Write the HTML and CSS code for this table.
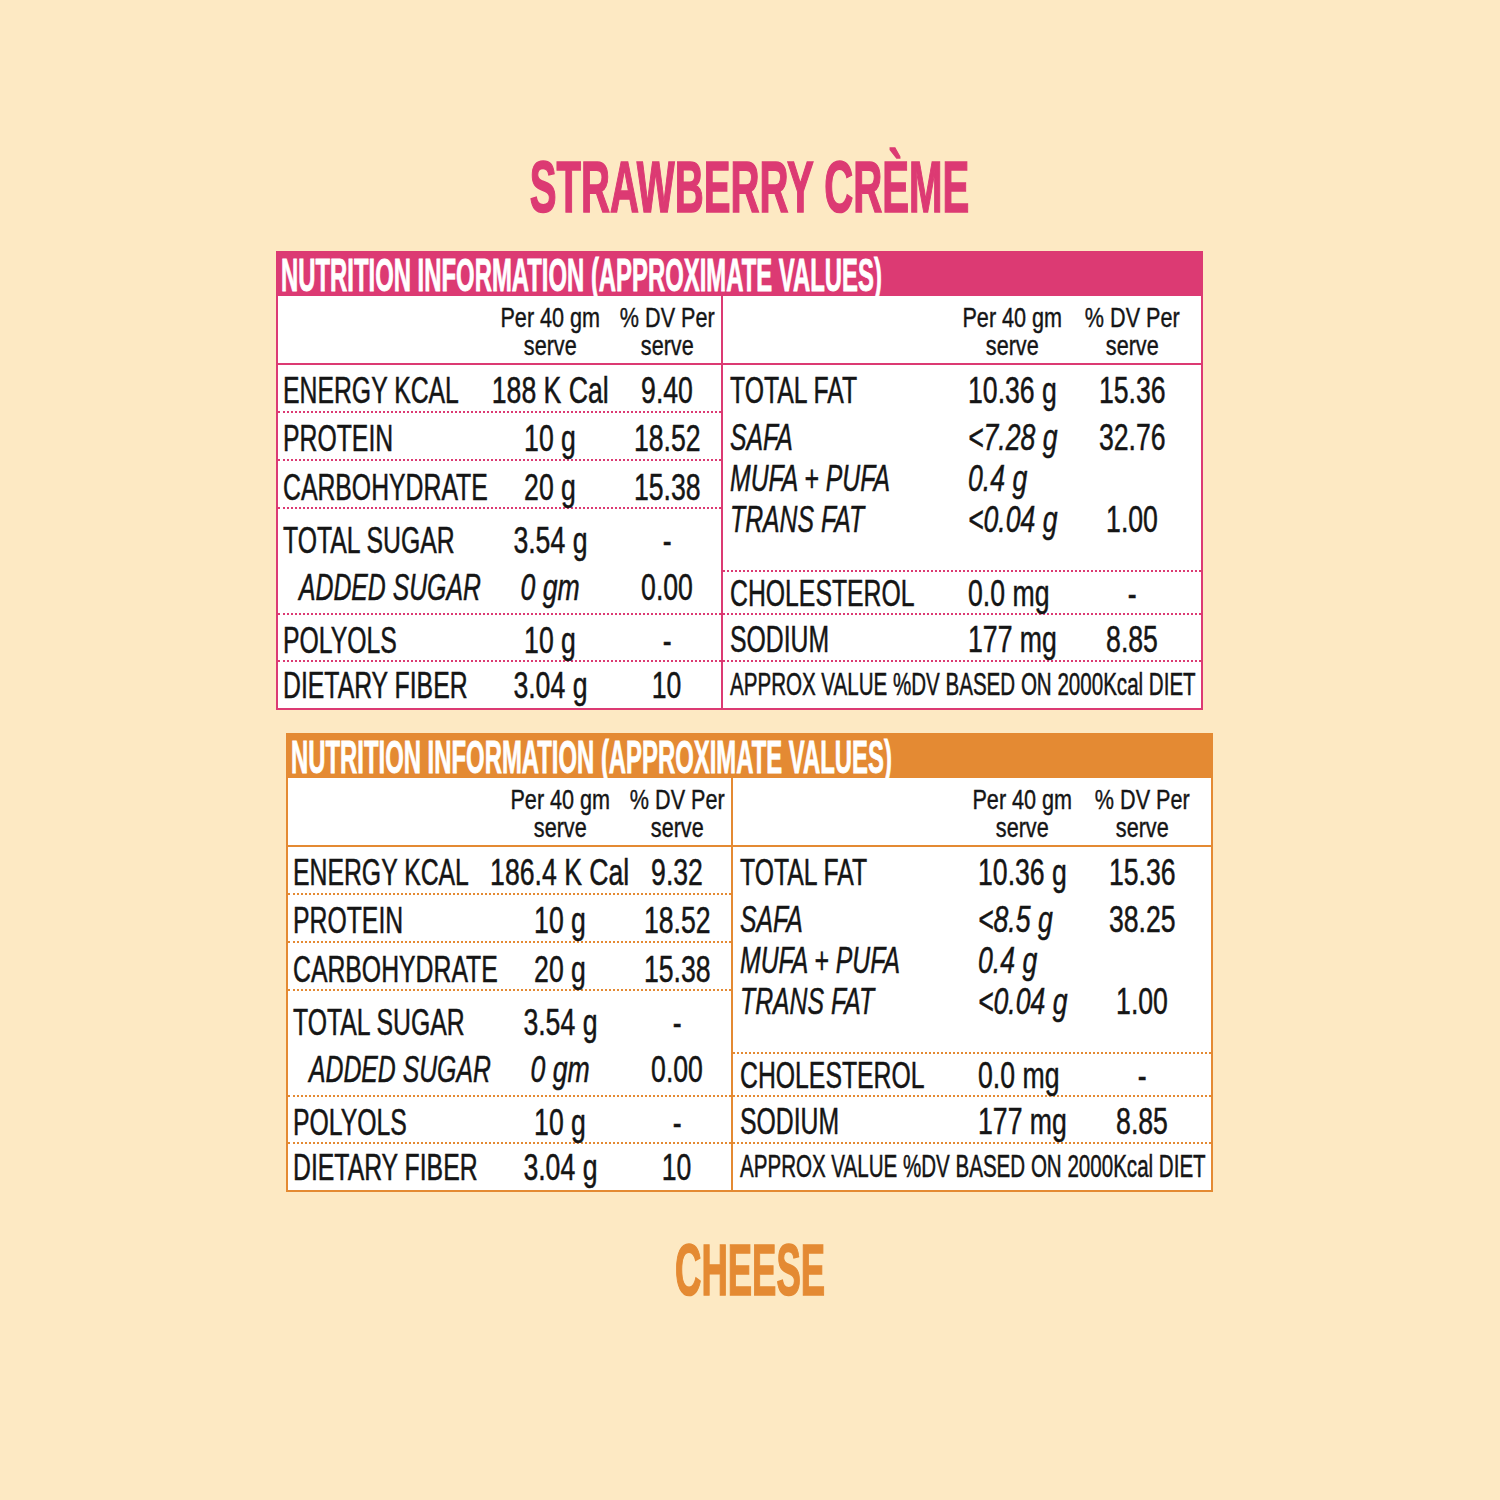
FILE: index.html
```html
<!DOCTYPE html>
<html>
<head>
<meta charset="utf-8">
<link rel="stylesheet" href="styles.css">
</head>
<body>
<div class="page">
  <div class="title pink"><span class="s">STRAWBERRY CRÈME</span></div>

  <div class="nt pink">
    <div class="bar"><span class="s">NUTRITION INFORMATION (APPROXIMATE VALUES)</span></div>
    <div class="cols">
      <div class="panel left">
        <div class="hdr"><div></div><div class="hc"><span class="s">Per 40 gm<br>serve</span></div><div class="hc"><span class="s">% DV Per<br>serve</span></div></div>
        <div class="row ra"><div class="ln"><div class="lb"><span class="s">ENERGY KCAL</span></div><div class="c"><span class="s n">188 K Cal</span></div><div class="c"><span class="s n">9.40</span></div></div></div>
        <div class="row ra"><div class="ln"><div class="lb"><span class="s">PROTEIN</span></div><div class="c"><span class="s n">10 g</span></div><div class="c"><span class="s n">18.52</span></div></div></div>
        <div class="row rb"><div class="ln"><div class="lb"><span class="s">CARBOHYDRATE</span></div><div class="c"><span class="s n">20 g</span></div><div class="c"><span class="s n">15.38</span></div></div></div>
        <div class="row rs">
          <div class="ln tall"><div class="lb"><span class="s">TOTAL SUGAR</span></div><div class="c"><span class="s n">3.54 g</span></div><div class="c"><span class="s n">-</span></div></div>
          <div class="ln tall"><div class="lb ind"><span class="s it">ADDED SUGAR</span></div><div class="c"><span class="s n it">0 gm</span></div><div class="c"><span class="s n">0.00</span></div></div>
        </div>
        <div class="row rp"><div class="ln"><div class="lb"><span class="s">POLYOLS</span></div><div class="c"><span class="s n">10 g</span></div><div class="c"><span class="s n">-</span></div></div></div>
        <div class="row rf"><div class="ln"><div class="lb"><span class="s">DIETARY FIBER</span></div><div class="c"><span class="s n">3.04 g</span></div><div class="c"><span class="s n">10</span></div></div></div>
      </div>
      <div class="panel right">
        <div class="hdr"><div></div><div class="hc"><span class="s">Per 40 gm<br>serve</span></div><div class="hc"><span class="s">% DV Per<br>serve</span></div></div>
        <div class="row rfat">
          <div class="ln first"><div class="lb"><span class="s">TOTAL FAT</span></div><div class="lv"><span class="s n">10.36 g</span></div><div class="c"><span class="s n">15.36</span></div></div>
          <div class="ln"><div class="lb"><span class="s it">SAFA</span></div><div class="lv"><span class="s n it">&lt;7.28 g</span></div><div class="c"><span class="s n">32.76</span></div></div>
          <div class="ln"><div class="lb"><span class="s it">MUFA + PUFA</span></div><div class="lv"><span class="s n it">0.4 g</span></div><div></div></div>
          <div class="ln"><div class="lb"><span class="s it">TRANS FAT</span></div><div class="lv"><span class="s n it">&lt;0.04 g</span></div><div class="c"><span class="s n">1.00</span></div></div>
        </div>
        <div class="row rch"><div class="ln"><div class="lb"><span class="s">CHOLESTEROL</span></div><div class="lv"><span class="s n">0.0 mg</span></div><div class="c"><span class="s n">-</span></div></div></div>
        <div class="row rso"><div class="ln"><div class="lb"><span class="s">SODIUM</span></div><div class="lv"><span class="s n">177 mg</span></div><div class="c"><span class="s n">8.85</span></div></div></div>
        <div class="row rap"><div class="lb"><span class="s">APPROX VALUE %DV BASED ON 2000Kcal DIET</span></div></div>
      </div>
    </div>
  </div>

  <div class="nt orange">
    <div class="bar"><span class="s">NUTRITION INFORMATION (APPROXIMATE VALUES)</span></div>
    <div class="cols">
      <div class="panel left">
        <div class="hdr"><div></div><div class="hc"><span class="s">Per 40 gm<br>serve</span></div><div class="hc"><span class="s">% DV Per<br>serve</span></div></div>
        <div class="row ra"><div class="ln"><div class="lb"><span class="s">ENERGY KCAL</span></div><div class="c"><span class="s n">186.4 K Cal</span></div><div class="c"><span class="s n">9.32</span></div></div></div>
        <div class="row ra"><div class="ln"><div class="lb"><span class="s">PROTEIN</span></div><div class="c"><span class="s n">10 g</span></div><div class="c"><span class="s n">18.52</span></div></div></div>
        <div class="row rb"><div class="ln"><div class="lb"><span class="s">CARBOHYDRATE</span></div><div class="c"><span class="s n">20 g</span></div><div class="c"><span class="s n">15.38</span></div></div></div>
        <div class="row rs">
          <div class="ln tall"><div class="lb"><span class="s">TOTAL SUGAR</span></div><div class="c"><span class="s n">3.54 g</span></div><div class="c"><span class="s n">-</span></div></div>
          <div class="ln tall"><div class="lb ind"><span class="s it">ADDED SUGAR</span></div><div class="c"><span class="s n it">0 gm</span></div><div class="c"><span class="s n">0.00</span></div></div>
        </div>
        <div class="row rp"><div class="ln"><div class="lb"><span class="s">POLYOLS</span></div><div class="c"><span class="s n">10 g</span></div><div class="c"><span class="s n">-</span></div></div></div>
        <div class="row rf"><div class="ln"><div class="lb"><span class="s">DIETARY FIBER</span></div><div class="c"><span class="s n">3.04 g</span></div><div class="c"><span class="s n">10</span></div></div></div>
      </div>
      <div class="panel right">
        <div class="hdr"><div></div><div class="hc"><span class="s">Per 40 gm<br>serve</span></div><div class="hc"><span class="s">% DV Per<br>serve</span></div></div>
        <div class="row rfat">
          <div class="ln first"><div class="lb"><span class="s">TOTAL FAT</span></div><div class="lv"><span class="s n">10.36 g</span></div><div class="c"><span class="s n">15.36</span></div></div>
          <div class="ln"><div class="lb"><span class="s it">SAFA</span></div><div class="lv"><span class="s n it">&lt;8.5 g</span></div><div class="c"><span class="s n">38.25</span></div></div>
          <div class="ln"><div class="lb"><span class="s it">MUFA + PUFA</span></div><div class="lv"><span class="s n it">0.4 g</span></div><div></div></div>
          <div class="ln"><div class="lb"><span class="s it">TRANS FAT</span></div><div class="lv"><span class="s n it">&lt;0.04 g</span></div><div class="c"><span class="s n">1.00</span></div></div>
        </div>
        <div class="row rch"><div class="ln"><div class="lb"><span class="s">CHOLESTEROL</span></div><div class="lv"><span class="s n">0.0 mg</span></div><div class="c"><span class="s n">-</span></div></div></div>
        <div class="row rso"><div class="ln"><div class="lb"><span class="s">SODIUM</span></div><div class="lv"><span class="s n">177 mg</span></div><div class="c"><span class="s n">8.85</span></div></div></div>
        <div class="row rap"><div class="lb"><span class="s">APPROX VALUE %DV BASED ON 2000Kcal DIET</span></div></div>
      </div>
    </div>
  </div>

  <div class="title orange"><span class="s">CHEESE</span></div>
</div>
</body>
</html>
```

FILE: styles.css
```css
html, body {
  margin: 0;
  padding: 0;
  background: #fde9c3;
}
body {
  font-family: "Liberation Sans", Arial, sans-serif;
  color: #151515;
}
.page {
  width: 1500px;
  height: 1500px;
  padding-top: 150px;
  box-sizing: border-box;
}
.s {
  display: inline-block;
  white-space: nowrap;
  transform-origin: left center;
  transform: scaleX(var(--sx, 0.67));
  -webkit-text-stroke: 0.5px currentColor;
}
.title {
  display: flex;
  justify-content: center;
  font-weight: 700;
  font-size: 73px;
  line-height: 73px;
  height: 73px;
}
.title .s {
  --sx: 0.55;
  transform-origin: center;
  -webkit-text-stroke: 1.6px currentColor;
}
.title.pink { color: #dc3a73; }
.title.orange { color: #e48a33; margin-top: 41px; }
.title.orange .s { --sx: 0.5; }

.nt {
  --c: #dc3a73;
  width: 927px;
  box-sizing: border-box;
  border: 2px solid var(--c);
  background: #fff;
  margin-top: 28px;
  margin-left: 276px;
}
.nt.orange {
  --c: #e48a33;
  margin-top: 23px;
  margin-left: 286px;
}
.bar {
  background: var(--c);
  height: 43px;
  box-sizing: border-box;
  padding: 1px 0 0 3px;
  font-size: 47px;
  line-height: 42px;
  font-weight: 700;
  color: #fff;
}
.bar .s {
  --sx: 0.508;
  -webkit-text-stroke: 0.9px currentColor;
}

.cols {
  display: grid;
  grid-template-columns: 443px 480px;
}
.right {
  border-left: 2px solid var(--c);
}
.hdr {
  display: grid;
  height: 69px;
  box-sizing: border-box;
  border-bottom: 2px solid var(--c);
  padding-top: 8px;
  font-size: 27px;
  line-height: 28px;
}
.left .hdr { grid-template-columns: 205px 134px 100px; }
.right .hdr { grid-template-columns: 229px 120px 120px; }
.hc {
  display: flex;
  justify-content: center;
}
.hc .s {
  --sx: 0.8;
  text-align: center;
  transform-origin: center;
  -webkit-text-stroke: 0.4px currentColor;
}

.row {
  box-sizing: border-box;
  border-bottom: 2px dotted var(--c);
  font-size: 37px;
  line-height: 41px;
}
.ln { display: grid; }
.left .ln { grid-template-columns: 205px 134px 100px; }
.right .ln { grid-template-columns: 245px 120px 88px; }
.lb { padding-left: 5px; }
.right .lb { padding-left: 7px; }
.lb.ind { padding-left: 21px; }
.c {
  display: flex;
  justify-content: center;
}
.c .s { transform-origin: center; }
.n { --sx: 0.72; }
.it { font-style: italic; }

.ra { height: 48px; padding-top: 5px; }
.rb { height: 48px; padding-top: 6px; }
.rs { height: 106px; padding-top: 8px; }
.ln.tall { line-height: 47px; }
.rp { height: 47px; padding-top: 5px; }
.rf { height: 46px; padding-top: 3px; border-bottom: 0; }

.rfat { height: 207px; padding-top: 5px; }
.ln.first { margin-bottom: 6px; }
.rch { height: 43px; padding-top: 1px; }
.rso { height: 47px; padding-top: 4px; }
.rap {
  height: 46px;
  padding-top: 7px;
  border-bottom: 0;
  font-size: 31px;
  line-height: 31px;
}
.rap .s { --sx: 0.663; }
```
